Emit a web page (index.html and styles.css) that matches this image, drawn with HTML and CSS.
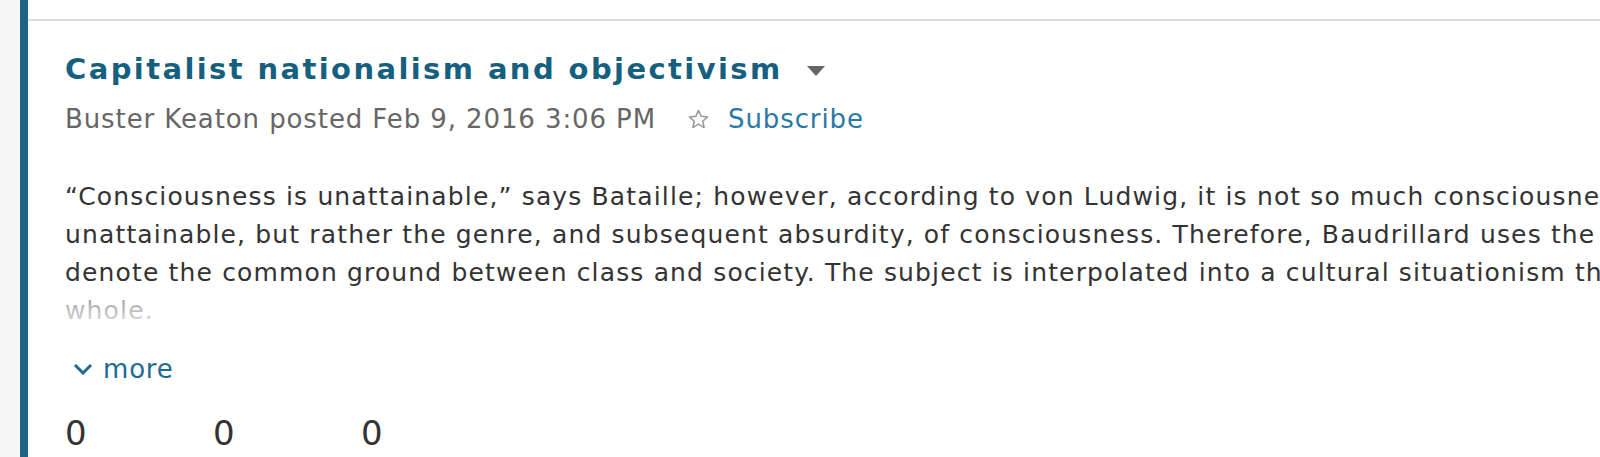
FILE: index.html
```html
<!DOCTYPE html>
<html lang="en">

<head>
    <meta charset="UTF-8">
    <meta name="viewport" content="width=device-width, initial-scale=1.0">
    <title>Capitalist nationalism and objectivism</title>
    <link rel="stylesheet" href="styles.css">
</head>

<body>
    <div class="stream">
        <div class="stream__gutter"></div>
        <div class="stream__list">
            <div class="post post--prev"></div>
            <div class="post">
                <h2 class="post__title">
                    <a href="#">Capitalist nationalism and objectivism</a>
                    <span class="post__caret"></span>
                </h2>
                <div class="post__meta">
                    <span>Buster Keaton posted Feb 9, 2016 3:06 PM</span>
                    <a href="#" class="subscribe">
                        <svg class="subscribe__star" viewBox="0 0 24 24" width="23" height="23">
                            <path d="M12 2.5l2.8 6.2 6.7.6-5.1 4.5 1.5 6.6L12 16.9l-5.9 3.5 1.5-6.6-5.1-4.5 6.7-.6z"
                                fill="none" stroke="#9a9a9a" stroke-width="1.6" stroke-linejoin="round" />
                        </svg>
                        Subscribe
                    </a>
                </div>
                <div class="post__text">
                    <p>
                        “Consciousness is unattainable,” says Bataille; however, according to von Ludwig, it is not so much consciousness that is<br>
                        unattainable, but rather the genre, and subsequent absurdity, of consciousness. Therefore, Baudrillard uses the term ‘capitalist nationalism’ to<br>
                        denote the common ground between class and society. The subject is interpolated into a cultural situationism that includes culture as a<br>
                        whole.
                    </p>
                </div>
                <a href="#" class="post__more">
                    <svg viewBox="0 0 20 12" width="20" height="12">
                        <path d="M2 2l8 8 8-8" fill="none" stroke="#1d6a93" stroke-width="3" />
                    </svg>
                    more
                </a>
                <div class="post__stats">
                    <span>0</span>
                    <span>0</span>
                    <span>0</span>
                </div>
            </div>
        </div>
    </div>
</body>

</html>
```

FILE: styles.css
```css
* {
    margin: 0;
    padding: 0;
    box-sizing: border-box;
}

body {
    height: 100vh;
    overflow: hidden;
    background: #fff;
    font-family: "DejaVu Sans", Verdana, sans-serif;
    color: #333;
}

a {
    text-decoration: none;
}

.stream {
    display: flex;
    height: 100%;
}

.stream__gutter {
    width: 20px;
    flex-shrink: 0;
    background: #f5f5f5;
}

.stream__list {
    flex: 1;
    min-width: 0;
    border-left: 8px solid #1b6385;
}

.post--prev {
    height: 21px;
    border-bottom: 2px solid #dddddd;
}

.post {
    padding-left: 37px;
}

.post__title {
    display: flex;
    align-items: center;
    gap: 24px;
    margin-top: 28px;
    font-size: 29px;
    line-height: 40px;
    font-weight: bold;
    letter-spacing: 2.4px;
}

.post__title a {
    color: #16607f;
}

.post__caret {
    width: 0;
    height: 0;
    border-left: 9px solid transparent;
    border-right: 9px solid transparent;
    border-top: 10px solid #666;
    margin-top: 4px;
}

.post__meta {
    display: flex;
    align-items: center;
    gap: 31px;
    margin-top: 14px;
    font-size: 26px;
    line-height: 32px;
    letter-spacing: 0.9px;
    color: #666;
}

.subscribe {
    display: flex;
    align-items: center;
    gap: 18px;
    color: #2a78a8;
}

.post__text {
    position: relative;
    margin-top: 43px;
    font-size: 25px;
    line-height: 38px;
    letter-spacing: 1.15px;
    white-space: nowrap;
    height: 152px;
    overflow: hidden;
}

.post__text::after {
    content: "";
    position: absolute;
    left: 0;
    right: 0;
    bottom: 0;
    height: 40px;
    background: linear-gradient(to bottom, rgba(255, 255, 255, .45), rgba(255, 255, 255, .9));
}

.post__more {
    display: flex;
    align-items: center;
    gap: 10px;
    margin-top: 23px;
    margin-left: 8px;
    font-size: 26px;
    line-height: 32px;
    letter-spacing: 0.8px;
    color: #1d6a93;
}

.post__stats {
    display: flex;
    margin-top: 28px;
    font-size: 34px;
    line-height: 40px;
    color: #333;
}

.post__stats span {
    width: 148px;
}
```
